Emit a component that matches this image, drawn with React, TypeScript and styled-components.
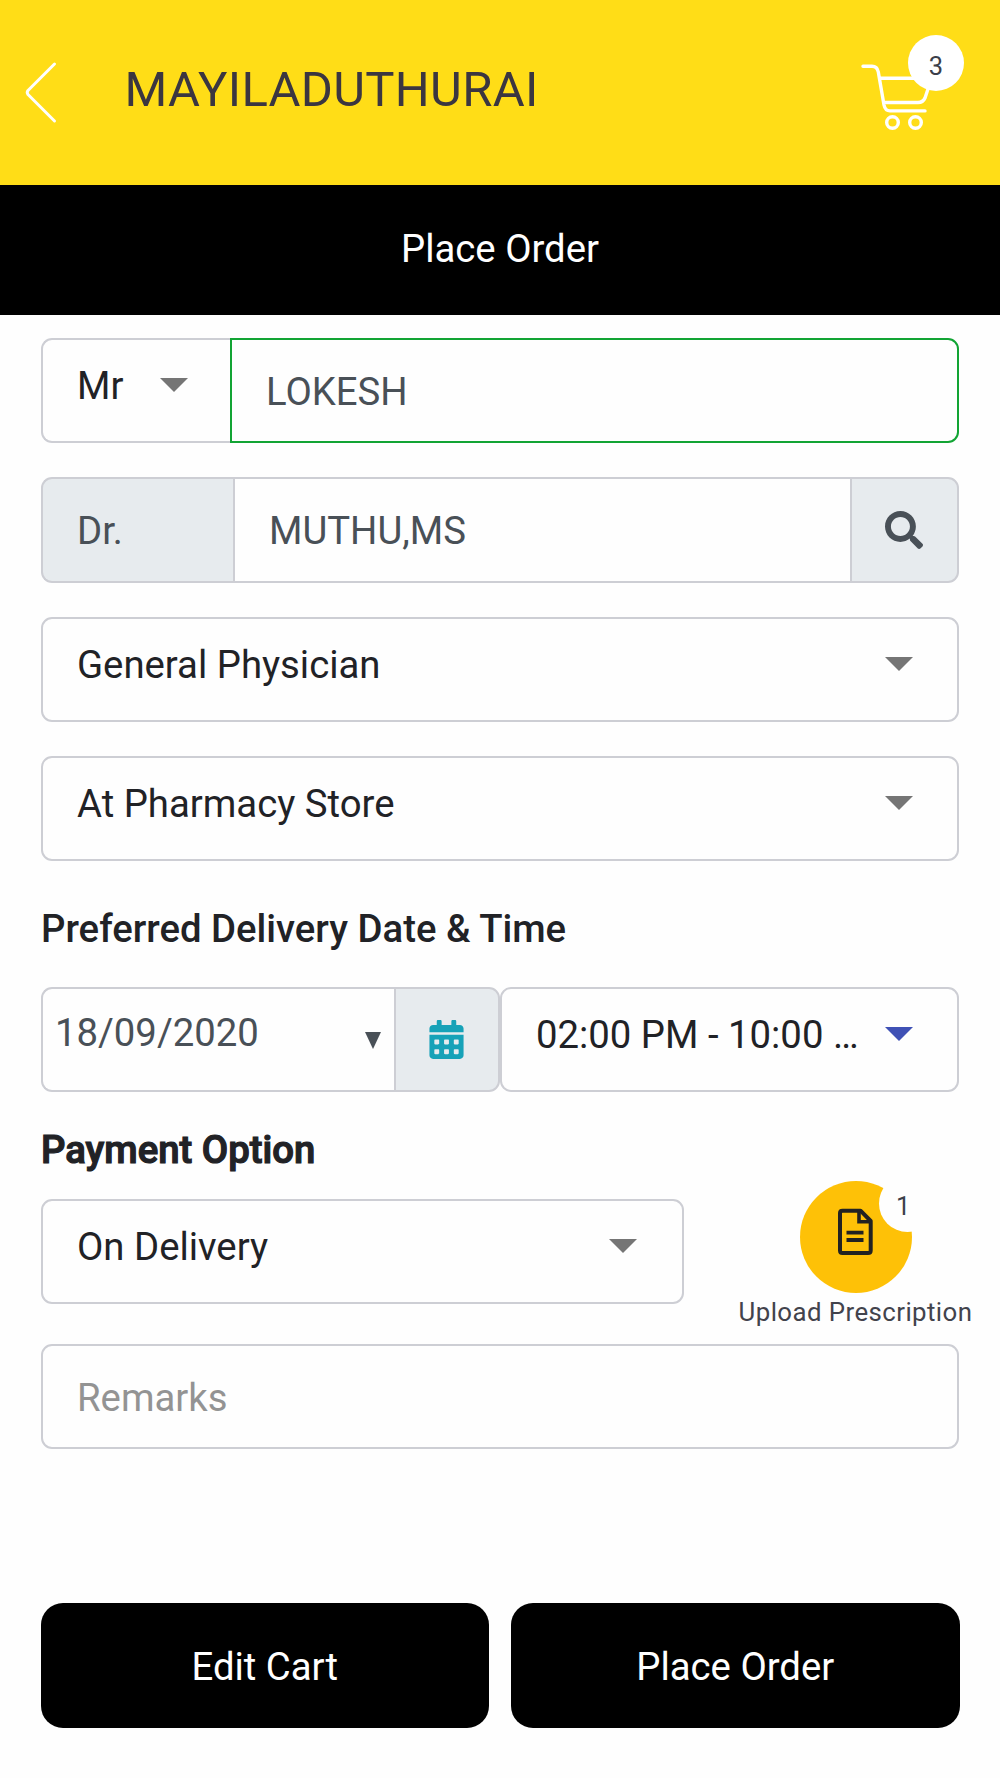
import React from 'react';
import styled, { createGlobalStyle, css } from 'styled-components';
import { FaCalendarAlt, FaSearch } from 'react-icons/fa';

const GlobalStyle = createGlobalStyle`
  *, *::before, *::after { box-sizing: border-box; }
  body {
    margin: 0;
    background: #fefefe;
    font-family: Roboto, "Liberation Sans", sans-serif;
    font-size: 38.3px;
    line-height: 44px;
    color: #212226;
  }
`;

const line = '#cdced4';
const addonFill = '#e7ebee';

const Screen = styled.div`
  display: flex;
  flex-direction: column;
  width: 1000px;
  height: 1778px;
  overflow: hidden;
`;

const Header = styled.header`
  display: flex;
  align-items: flex-start;
  height: 184.5px;
  background: #ffdd17;
`;

const BackButton = styled.button`
  display: flex;
  margin: 60px 0 0 23.5px;
  padding: 0;
  border: 0;
  background: none;
`;

const StoreName = styled.h1`
  margin: 60px auto 0 65px;
  font-size: 49px;
  font-weight: 400;
  line-height: 60px;
  letter-spacing: 0.3px;
  color: #3b3640;
`;

const CartButton = styled.div`
  position: relative;
  display: flex;
  margin: 60px 68px 0 0;
`;

const CartCount = styled.span`
  position: absolute;
  left: 48px;
  top: -25px;
  width: 56px;
  height: 56px;
  border-radius: 50%;
  background: #fff;
  color: #3c3f4a;
  font-size: 25.5px;
  line-height: 62px;
  text-align: center;
`;

const TitleBar = styled.div`
  height: 130.5px;
  padding-top: 42.5px;
  background: #000;
  color: #fff;
  text-align: center;
`;

const Form = styled.form`
  display: flex;
  flex-direction: column;
  padding: 23px 41px 0 41px;
`;

const Group = styled.div<{ $gap?: number }>`
  display: flex;
  height: 105.3px;
  margin-bottom: ${(p) => p.$gap ?? 34}px;
`;

const cell = css<{ $width?: number; $corners?: string; $open?: boolean }>`
  display: flex;
  ${(p) => (p.$width ? `flex: 0 0 ${p.$width}px;` : 'flex: 1 1 0; min-width: 0;')}
  height: 105.3px;
  border: 2px solid ${line};
  ${(p) => p.$open && 'border-right: 0;'}
  border-radius: ${(p) => p.$corners ?? '11px'};
`;

const SelectBox = styled.div<{ $width?: number; $corners?: string; $open?: boolean; $end?: number }>`
  ${cell}
  justify-content: space-between;
  padding: 24px ${(p) => p.$end ?? 44.5}px 0 34px;
`;

const SelectValue = styled.span`
  white-space: nowrap;
`;

const Caret = styled.i<{ $color?: string }>`
  margin-top: 14px;
  width: 0;
  height: 0;
  border: solid transparent;
  border-width: 14px 14px 0;
  border-top-color: ${(p) => p.$color ?? '#757575'};
`;

const TextBox = styled.div<{ $width?: number; $corners?: string; $open?: boolean; $valid?: boolean; $muted?: boolean }>`
  ${cell}
  padding: 30px 34px 0;
  color: ${(p) => (p.$muted ? '#939393' : '#495057')};
  ${(p) => p.$valid && 'border-color: #12a434;'}
`;

const Addon = styled(TextBox)`
  background: ${addonFill};
`;

const IconAddon = styled(Addon)`
  align-items: center;
  justify-content: center;
  padding: 0 1px 0 0;
`;

const DateBox = styled(TextBox)`
  justify-content: space-between;
  padding: 22px 13px 0 12px;
  letter-spacing: 0;
`;

const DateCaret = styled.i`
  margin-top: 21px;
  width: 0;
  height: 0;
  border: solid transparent;
  border-width: 17px 8.5px 0;
  border-top-color: #495057;
`;

const SectionLabel = styled.h2<{ $height: number; $heavy?: boolean }>`
  margin: 0;
  height: ${(p) => p.$height}px;
  padding-top: 1px;
  font-size: 38.3px;
  font-weight: 500;
  line-height: 44px;
  white-space: nowrap;
  ${(p) => p.$heavy && 'padding-top: 2px; -webkit-text-stroke: 1.2px #212226; letter-spacing: 0;'}
`;

const PaymentRow = styled.div`
  display: flex;
  height: 144.5px;
`;

const Upload = styled.div`
  display: flex;
  flex-direction: column;
  align-items: center;
  width: 235px;
  margin: -18px -14px 0 auto;
`;

const UploadCircle = styled.div`
  position: relative;
  width: 112px;
  height: 112px;
  padding: 26px 0 0 37.5px;
  border-radius: 50%;
  background: #fec107;
`;

const UploadCount = styled.span`
  position: absolute;
  left: 79px;
  top: -6px;
  width: 57px;
  height: 57px;
  padding-left: 17.5px;
  border-radius: 50%;
  background: #fefefe;
  color: #3c3f4a;
  font-size: 25.5px;
  line-height: 62px;
`;

const UploadLabel = styled.span`
  font-size: 25.8px;
  line-height: 39px;
  letter-spacing: 0.43px;
  white-space: nowrap;
  color: #42434c;
`;

const Actions = styled.div`
  display: flex;
  gap: 22px;
  margin: 154px 40.5px 0 40.5px;
`;

const ActionButton = styled.button`
  flex: 1;
  height: 125.3px;
  padding: 2px 0 0;
  border: 0;
  border-radius: 22px;
  background: #000;
  color: #fff;
  font: inherit;
`;

const CartIcon = () => (
  <svg width="72" height="72" viewBox="860 60 72 72" fill="none" stroke="#fff" strokeWidth="3.4" strokeLinecap="round" strokeLinejoin="round">
    <path d="M863 66.3H872C876 66.3 877.5 68 878.3 72L884 105Q885.2 110.9 890 110.9H925" />
    <path d="M880 78.2H925M884 102.5H918Q923 102.5 925 98L929 86" />
    <circle cx="892.5" cy="122.5" r="5.8" />
    <circle cx="915.5" cy="122.5" r="5.8" />
  </svg>
);

const DocumentIcon = () => (
  <svg width="36" height="50" viewBox="837 1208 36 50" fill="none" stroke="#222" strokeWidth="4">
    <path d="M842.5 1211.7H860.5L870.7 1222V1251.5Q870.7 1254 868 1254H842.5Q840 1254 840 1251.5V1214Q840 1211.7 842.5 1211.7Z" strokeLinejoin="round" />
    <path d="M859 1211V1222.8H871" strokeWidth="3.6" />
    <path d="M846.5 1233.7H863.5M846.5 1241H863.5" strokeWidth="3.8" />
  </svg>
);

export default function App() {
  return (
    <Screen>
      <GlobalStyle />
      <Header>
        <BackButton type="button" aria-label="Back">
          <svg width="36" height="66" viewBox="0 0 36 66" fill="none" stroke="#fff" strokeWidth="3" strokeLinecap="round" strokeLinejoin="round">
            <path d="M30.5 4L4 30.5Q2.5 32.5 4 34.5L30.5 61" />
          </svg>
        </BackButton>
        <StoreName>MAYILADUTHURAI</StoreName>
        <CartButton>
          <CartIcon />
          <CartCount>3</CartCount>
        </CartButton>
      </Header>
      <TitleBar>Place Order</TitleBar>

      <Form>
        <Group>
          <SelectBox $width={189} $corners="11px 0 0 11px" $open $end={42}>
            <SelectValue>Mr</SelectValue>
            <Caret />
          </SelectBox>
          <TextBox $corners="0 11px 11px 0" $valid>LOKESH</TextBox>
        </Group>
        <Group>
          <Addon $width={192} $corners="11px 0 0 11px" $open>Dr.</Addon>
          <TextBox $corners="0" $open>MUTHU,MS</TextBox>
          <IconAddon $width={109} $corners="0 11px 11px 0">
            <FaSearch size={38} />
          </IconAddon>
        </Group>
        <Group>
          <SelectBox>
            <SelectValue>General Physician</SelectValue>
            <Caret />
          </SelectBox>
        </Group>
        <Group $gap={45}>
          <SelectBox>
            <SelectValue>At Pharmacy Store</SelectValue>
            <Caret />
          </SelectBox>
        </Group>

        <SectionLabel $height={81}>Preferred Delivery Date &amp; Time</SectionLabel>
        <Group>
          <DateBox $width={353} $corners="11px 0 0 11px" $open>
            18/09/2020
            <DateCaret />
          </DateBox>
          <IconAddon $width={106} $corners="0 11px 11px 0">
            <FaCalendarAlt size={39} color="#17a2b8" />
          </IconAddon>
          <SelectBox>
            <SelectValue>02:00 PM - 10:00 …</SelectValue>
            <Caret $color="#3f51b5" />
          </SelectBox>
        </Group>

        <SectionLabel $height={72.7} $heavy>Payment Option</SectionLabel>
        <PaymentRow>
          <SelectBox $width={642.5}>
            <SelectValue>On Delivery</SelectValue>
            <Caret />
          </SelectBox>
          <Upload>
            <UploadCircle>
              <DocumentIcon />
              <UploadCount>1</UploadCount>
            </UploadCircle>
            <UploadLabel>Upload Prescription</UploadLabel>
          </Upload>
        </PaymentRow>
        <Group $gap={0}>
          <TextBox $muted>Remarks</TextBox>
        </Group>
      </Form>

      <Actions>
        <ActionButton type="button">Edit Cart</ActionButton>
        <ActionButton type="button">Place Order</ActionButton>
      </Actions>
    </Screen>
  );
}
